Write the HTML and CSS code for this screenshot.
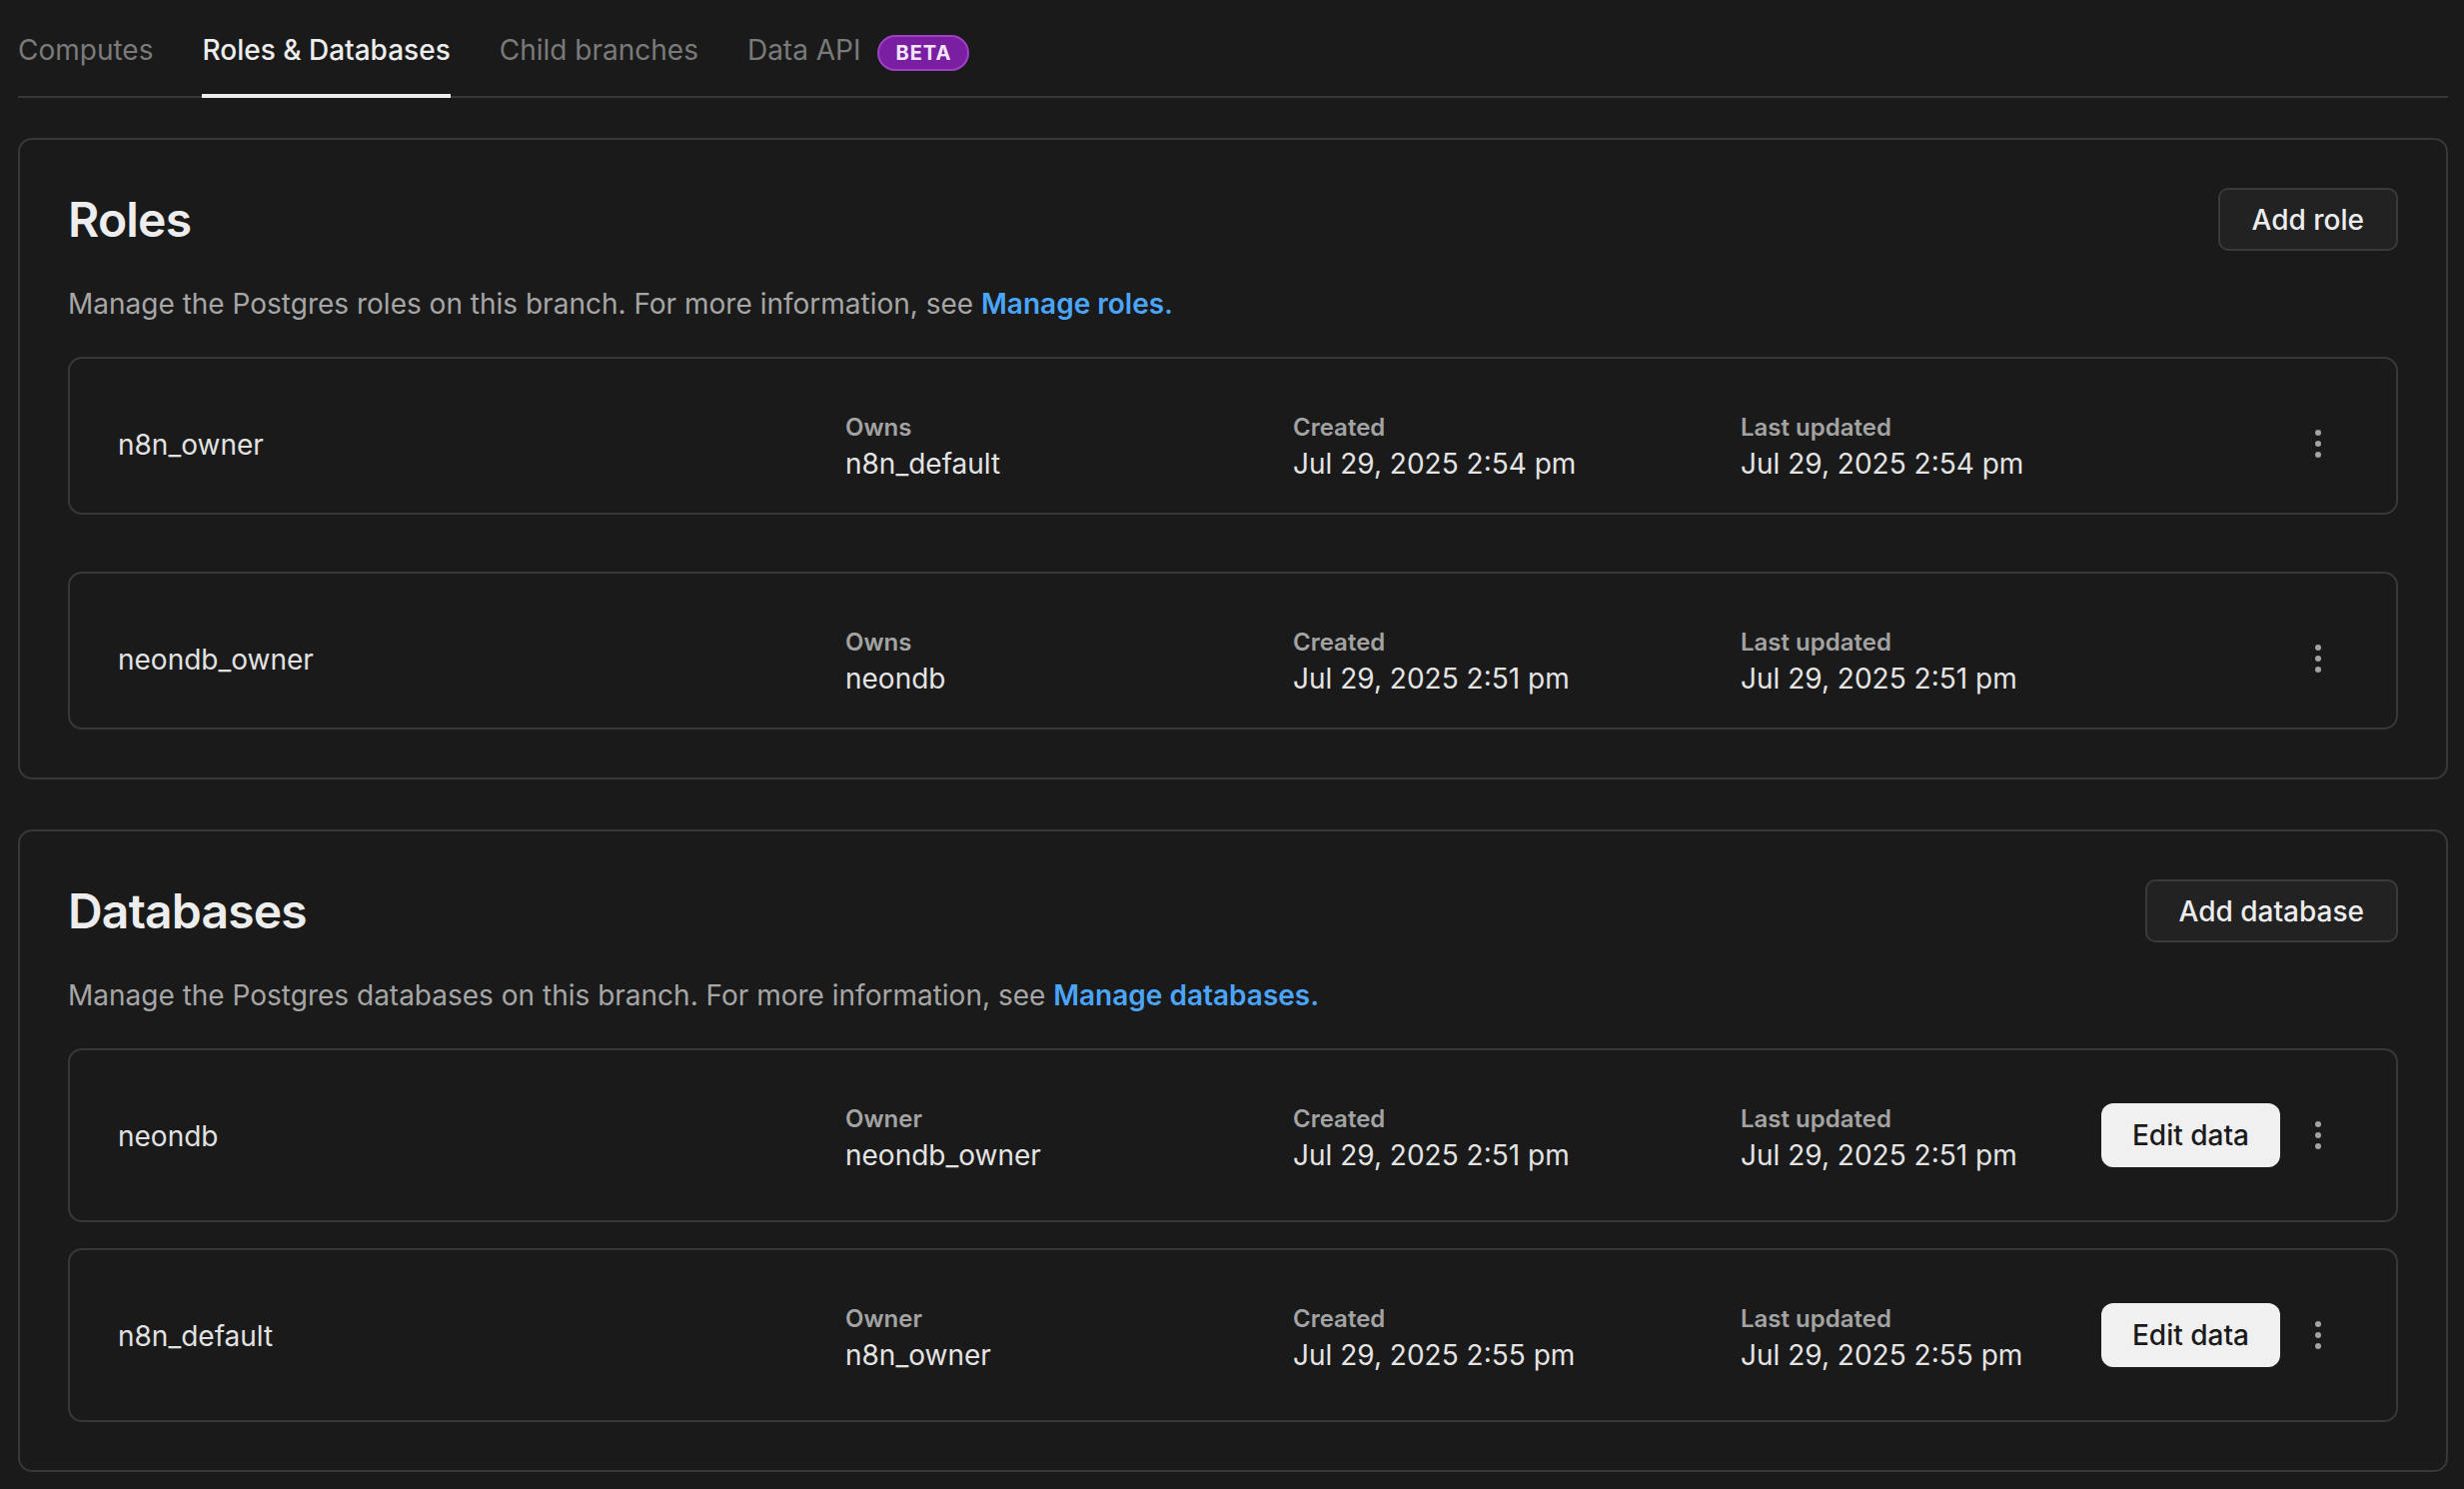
FILE: index.html
```html
<!DOCTYPE html>
<html lang="en">
<head>
<meta charset="utf-8">
<title>Roles &amp; Databases</title>
<link rel="stylesheet" href="styles.css">
</head>
<body>
<div class="page">
  <nav class="tabs">
    <a class="tab">Computes</a>
    <a class="tab active">Roles &amp; Databases</a>
    <a class="tab">Child branches</a>
    <a class="tab">Data API <span class="badge">BETA</span></a>
  </nav>

  <section class="card">
    <div class="card-head">
      <h2>Roles</h2>
      <button class="btn">Add role</button>
    </div>
    <p class="desc">Manage the Postgres roles on this branch. For more information, see <a class="link">Manage roles.</a></p>
    <div class="list roles">
      <div class="row">
        <div class="name">n8n_owner</div>
        <div class="field"><div class="label">Owns</div><div class="value">n8n_default</div></div>
        <div class="field"><div class="label">Created</div><div class="value">Jul 29, 2025 2:54 pm</div></div>
        <div class="field"><div class="label">Last updated</div><div class="value">Jul 29, 2025 2:54 pm</div></div>
        <div class="actions">
          <button class="kebab" aria-label="More"><svg width="8" height="30" viewBox="0 0 8 30"><circle cx="4" cy="4" r="3"/><circle cx="4" cy="15" r="3"/><circle cx="4" cy="26" r="3"/></svg></button>
        </div>
      </div>
      <div class="row">
        <div class="name">neondb_owner</div>
        <div class="field"><div class="label">Owns</div><div class="value">neondb</div></div>
        <div class="field"><div class="label">Created</div><div class="value">Jul 29, 2025 2:51 pm</div></div>
        <div class="field"><div class="label">Last updated</div><div class="value">Jul 29, 2025 2:51 pm</div></div>
        <div class="actions">
          <button class="kebab" aria-label="More"><svg width="8" height="30" viewBox="0 0 8 30"><circle cx="4" cy="4" r="3"/><circle cx="4" cy="15" r="3"/><circle cx="4" cy="26" r="3"/></svg></button>
        </div>
      </div>
    </div>
  </section>

  <section class="card">
    <div class="card-head">
      <h2>Databases</h2>
      <button class="btn">Add database</button>
    </div>
    <p class="desc">Manage the Postgres databases on this branch. For more information, see <a class="link">Manage databases.</a></p>
    <div class="list dbs">
      <div class="row">
        <div class="name">neondb</div>
        <div class="field"><div class="label">Owner</div><div class="value">neondb_owner</div></div>
        <div class="field"><div class="label">Created</div><div class="value">Jul 29, 2025 2:51 pm</div></div>
        <div class="field"><div class="label">Last updated</div><div class="value">Jul 29, 2025 2:51 pm</div></div>
        <div class="actions">
          <button class="btn-light">Edit data</button>
          <button class="kebab" aria-label="More"><svg width="8" height="30" viewBox="0 0 8 30"><circle cx="4" cy="4" r="3"/><circle cx="4" cy="15" r="3"/><circle cx="4" cy="26" r="3"/></svg></button>
        </div>
      </div>
      <div class="row">
        <div class="name">n8n_default</div>
        <div class="field"><div class="label">Owner</div><div class="value">n8n_owner</div></div>
        <div class="field"><div class="label">Created</div><div class="value">Jul 29, 2025 2:55 pm</div></div>
        <div class="field"><div class="label">Last updated</div><div class="value">Jul 29, 2025 2:55 pm</div></div>
        <div class="actions">
          <button class="btn-light">Edit data</button>
          <button class="kebab" aria-label="More"><svg width="8" height="30" viewBox="0 0 8 30"><circle cx="4" cy="4" r="3"/><circle cx="4" cy="15" r="3"/><circle cx="4" cy="26" r="3"/></svg></button>
        </div>
      </div>
    </div>
  </section>
</div>
</body>
</html>
```

FILE: styles.css
```css
* {
  box-sizing: border-box;
}

html,
body {
  margin: 0;
  background: #1a1a1a;
}

body {
  font-family: Inter, "Noto Sans", "Liberation Sans", sans-serif;
  color: #e5e5e5;
}

.page {
  padding: 30px 16px 0 18px;
}

/* Tabs */
.tabs {
  display: flex;
  gap: 49px;
  border-bottom: 2px solid #383838;
}

.tab {
  display: flex;
  align-items: center;
  gap: 17px;
  height: 68px;
  font-size: 28px;
  line-height: 40px;
  color: #7a7a7a;
  padding-bottom: 24px;
  margin-bottom: -2px;
  border-bottom: 4px solid transparent;
}

.tab.active {
  color: #ededed;
  font-weight: 500;
  border-bottom-color: #ededed;
}

.badge {
  display: inline-flex;
  align-items: center;
  justify-content: center;
  height: 36px;
  margin-top: 3px;
  margin-bottom: -3px;
  padding: 0 16px;
  border-radius: 18px;
  background: #7a1fa2;
  border: 2px solid #9d40c6;
  color: #f3e6fa;
  font-size: 20px;
  font-weight: 700;
  letter-spacing: 1px;
  line-height: 1;
}

/* Cards */
.card {
  margin-top: 40px;
  border: 2px solid #383838;
  border-radius: 14px;
  padding: 48px;
}

.card + .card {
  margin-top: 50px;
}

.card-head {
  display: flex;
  justify-content: space-between;
  align-items: center;
}

.card-head h2 {
  margin: 0;
  font-size: 48px;
  line-height: 58px;
  font-weight: 600;
  letter-spacing: -0.8px;
  color: #ededed;
}

.btn {
  height: 63px;
  padding: 0 32px;
  font-family: inherit;
  font-size: 28px;
  font-weight: 500;
  color: #ededed;
  background: #222222;
  border: 2px solid #3a3a3a;
  border-radius: 10px;
}

.desc {
  margin: 32px 0;
  font-size: 28px;
  line-height: 42px;
  color: #a6a6a6;
}

.link {
  color: #4ba5f8;
  font-weight: 600;
}

/* Rows */
.list {
  display: flex;
  flex-direction: column;
  gap: 26px;
}

.list.roles {
  gap: 57px;
}

.row {
  display: grid;
  grid-template-columns: 728px 448px 448px 1fr auto;
  align-items: center;
  border: 2px solid #383838;
  border-radius: 14px;
  padding: 49px 48px;
}

.roles .row {
  padding-bottom: 33px;
}

.name {
  font-size: 28px;
  line-height: 40px;
  padding-top: 2px;
  color: #e2e2e2;
}

.label {
  font-size: 24px;
  line-height: 40px;
  font-weight: 600;
  color: #a3a3a3;
}

.value {
  font-size: 28px;
  line-height: 32px;
  color: #e4e4e4;
}

.actions {
  display: flex;
  align-items: center;
  gap: 8px;
}

.btn-light {
  height: 64px;
  padding: 0 31px;
  font-family: inherit;
  font-size: 28px;
  font-weight: 500;
  color: #1a1a1a;
  background: #f0f0f0;
  border: none;
  border-radius: 12px;
}

.kebab {
  width: 60px;
  height: 44px;
  display: flex;
  align-items: center;
  justify-content: center;
  padding: 0;
  background: none;
  border: none;
  fill: #a3a3a3;
}
```
